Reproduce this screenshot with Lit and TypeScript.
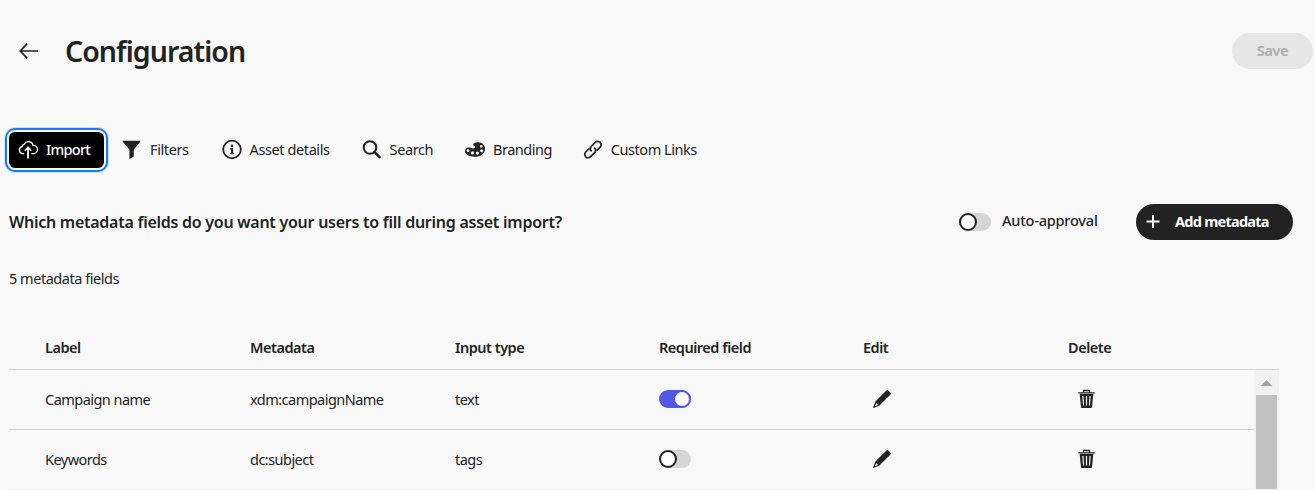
import { LitElement, html, css, svg } from "lit";
import { customElement, property } from "lit/decorators.js";
import { classMap } from "lit/directives/class-map.js";

const icons: Record<string, unknown> = {
  back: svg`<path d="M20 10H2.500M9.200 2.600L2.300 10l6.900 7.400" fill="none" stroke="currentColor" stroke-width="1.700"/>`,
  import: svg`<path d="M6.200 13.600H4.600A3.500 3.500 0 0 1 4.100 6.700 3 3 0 0 1 6.200 4.100 4.700 4.700 0 0 1 15 5.400a4.100 4.100 0 0 1 .6 8.200h-2.200" fill="none" stroke="currentColor" stroke-width="1.300"/><path d="M10 18.500V8.100" stroke="currentColor" stroke-width="1.800"/><path d="M6.800 10.800L10 7.200l3.200 3.600" fill="none" stroke="currentColor" stroke-width="1.500"/>`,
  filter: svg`<path d="M.9 .8h17.200c.4 0 .6.400.3.700l-6.600 7.900v7.200l-3.800 2.200c-.3.100-.6 0-.6-.3V9.400L.6 1.500c-.2-.3 0-.7.300-.7z" fill="currentColor"/>`,
  info: svg`<circle cx="10" cy="9.500" r="8.800" fill="none" stroke="currentColor" stroke-width="1.800"/><circle cx="10" cy="5.700" r="1.250" fill="currentColor"/><path d="M8 8.200h3.100v4.600h1.100v1.400H7.900v-1.400h1.200V9.600H8z" fill="currentColor"/>`,
  search: svg`<circle cx="8" cy="7.500" r="6.300" fill="none" stroke="currentColor" stroke-width="2"/><path d="M12.600 12.100l5 5" stroke="currentColor" stroke-width="2.600" stroke-linecap="round"/>`,
  palette: svg`<path fill="currentColor" fill-rule="evenodd" d="M13 2.300c4.100.1 7 2.800 7 6.400 0 4.700-4.300 8.100-10.300 8.100C4 16.800 0 14.500 0 11.100 0 8.900 1.700 7.400 4 7.400c2 0 3.100 1 4.500 1 1.200 0 1.700-.6 1.700-1.400 0-1.300-2.100-.9-2.100-2.200C8.100 3.200 10.300 2.200 13 2.300zM16.300 4.900a1.400 1.400 0 1 0 0 2.800 1.400 1.400 0 0 0 0-2.800zM16.600 9.200a1.500 1.500 0 1 0 0 3 1.500 1.500 0 0 0 0-3zM12.400 11.500a1.600 1.600 0 1 0 0 3.200 1.600 1.600 0 0 0 0-3.200zM7.500 11.200a1.700 1.700 0 1 0 0 3.400 1.700 1.700 0 0 0 0-3.400zM3.100 9.300a1.400 1.400 0 1 0 0 2.800 1.400 1.400 0 0 0 0-2.800z"/>`,
  link: svg`<g fill="none" stroke="currentColor" stroke-width="1.700"><path d="M8.600 11.400A3.400 3.400 0 0 1 8 6.700l4.300-4.300a3.300 3.300 0 0 1 4.900 4.700l-3.500 3.500"/><path d="M11.300 7.700a3.400 3.400 0 0 1 .6 4.700l-4.300 4.300a3.300 3.300 0 0 1-4.900-4.700l3.500-3.500"/></g>`,
  plus: svg`<path d="M8 3v13M1.500 9.500h13" stroke="currentColor" stroke-width="2"/>`,
  pencil: svg`<path fill="currentColor" fill-rule="evenodd" d="M14.700 1.200c.4-.4.900-.4 1.300 0l2.800 2.800c.4.400.4.800 0 1.200L7.400 16.400 1.700 18.900c-.4.200-.7-.1-.6-.5L3.400 12.500zM4.300 14.100l-1.400 3.200 3.200-1.400z"/>`,
  trash: svg`<path fill="currentColor" fill-rule="evenodd" d="M2.700 5h13.600l-1.300 13.300c-.1.500-.4.800-.9.800H4.900c-.5 0-.8-.3-.9-.8zM5.300 6.900l.7 9.700h1.100l-.6-9.700zM8.900 6.900v9.700h1.200V6.900zM12.500 6.900l-.6 9.700h1.100l.7-9.700z"/><path d="M1.300 3.800h16.400M6.500 3.600V1.500h6v2.100" fill="none" stroke="currentColor" stroke-width="1.300"/>`,
};

const fields = [
  { label: "Campaign name", metadata: "xdm:campaignName", type: "text", required: true },
  { label: "Keywords", metadata: "dc:subject", type: "tags", required: false },
];

const tabs = [
  { id: "import", icon: "import", label: "Import" },
  { id: "filters", icon: "filter", label: "Filters" },
  { id: "details", icon: "info", label: "Asset details" },
  { id: "search", icon: "search", label: "Search" },
  { id: "branding", icon: "palette", label: "Branding" },
  { id: "links", icon: "link", label: "Custom Links" },
];

@customElement("ui-icon")
class UiIcon extends LitElement {
  @property() name = "";
  static styles = css`
    :host { display: block; width: 20px; height: 20px; flex: none; }
    .glyph { display: block; width: 100%; height: 100%; overflow: visible; }
  `;
  render() {
    return html`<svg class="glyph" viewBox="0 0 20 20">${icons[this.name]}</svg>`;
  }
}

@customElement("ui-switch")
class UiSwitch extends LitElement {
  @property({ type: Boolean }) on = false;
  static styles = css`
    :host { display: block; flex: none; }
    .track { display: flex; box-sizing: border-box; width: 32px; height: 18px; border-radius: 9px; background: #d5d5d5; }
    .knob { box-sizing: border-box; width: 18px; height: 18px; border: 2px solid #222; border-radius: 50%; background: #fff; }
    .track.on { background: #5258e4; justify-content: flex-end; }
    .on .knob { border-color: #5258e4; }
  `;
  render() {
    return html`<div class=${classMap({ track: true, on: this.on })}><div class="knob"></div></div>`;
  }
}

@customElement("app-root")
class AppRoot extends LitElement {
  static styles = css`
    :host { display: block; height: 490px; overflow: hidden; background: #f8f8f8; color: #222; font: 14.5px/20px "Noto Sans", "Open Sans", sans-serif; letter-spacing: -0.53px; }
    .page { display: flex; flex-direction: column; height: 490px; }
    .header { display: flex; align-items: center; height: 36px; padding: 33px 2px 0 18px; }
    .title { margin: 0 auto 0 27px; font-size: 28.5px; line-height: 36px; font-weight: 600; letter-spacing: -0.95px; }
    .save { width: 81px; height: 36px; border-radius: 18px; background: #e6e6e6; color: #b1b1b1; font-weight: 700; line-height: 34px; text-align: center; }
    .tabs { display: flex; margin: 62px 0 0 9px; height: 38px; align-items: center; letter-spacing: -0.4px; }
    .tab { display: flex; align-items: center; gap: 8px; height: 36px; }
    .tab span { margin-top: -2px; }
    .tab + .tab { margin-left: 32px; }
    .tab.active { width: 76px; padding: 0 10px 0 9px; border-radius: 6px; background: #000; color: #fff; font-weight: 500; letter-spacing: -0.7px; box-shadow: 0 0 0 2px #f8f8f8, 0 0 0 4px #1b7bf0, 0 0 0 5px #cfe2fa; }
    .tab.active + .tab { margin-left: 18px; }
    .tab.details { margin-left: 33px; }
    .tab.links { margin-left: 31px; letter-spacing: -0.45px; }
    .tab.branding { letter-spacing: -0.5px; }
    .toolbar { display: flex; align-items: center; height: 36px; margin: 35px 22px 0 9px; }
    .question { margin-right: auto; font-size: 16px; font-weight: 600; letter-spacing: -0.26px; }
    .auto { width: 95px; margin: -4px 39px 0 11px; font-weight: 500; letter-spacing: -0.2px; white-space: nowrap; }
    .add { display: flex; align-items: center; box-sizing: border-box; width: 157px; height: 36px; padding-left: 9px; gap: 10px; border-radius: 18px; background: #222; color: #fff; font-weight: 700; letter-spacing: -0.75px; }
    .add span { margin-top: -2px; }
    .count { margin: 28px 0 0 9px; letter-spacing: -0.47px; }
    .row { display: grid; grid-template-columns: 205px 205px 204px 204px 205px 1fr; align-items: center; padding-left: 36px; box-sizing: border-box; }
    .table { margin: 38px 36px 0 9px; width: 1270px; }
    .head { height: 44px; padding-bottom: 2px; border-bottom: 1px solid #d5d5d5; font-weight: 600; letter-spacing: -0.48px; }
    .body { display: flex; height: 120px; }
    .rows { flex: 1; }
    .rows .row { height: 60px; padding-bottom: 1px; border-bottom: 1px solid #d0d0d0; }
    .rows .row:last-child { border-color: #ededed; }
    .action { margin-left: 9px; }
    .scroll { width: 25px; background: #f1f1f1; display: flex; flex-direction: column; align-items: center; }
    .arrow { width: 12px; height: 6px; margin: 10px 0 9px; background: #a3a3a3; clip-path: polygon(50% 0, 100% 100%, 0 100%); }
    .thumb { width: 21px; height: 94px; background: #c1c1c1; }
  `;
  render() {
    return html`<main class="page">
      <header class="header"><ui-icon name="back"></ui-icon><div class="title">Configuration</div><div class="save">Save</div></header>
      <nav class="tabs">${tabs.map((t, i) => html`<div class=${classMap({ tab: true, active: i === 0, [t.id]: true })}><ui-icon name=${t.icon}></ui-icon><span>${t.label}</span></div>`)}</nav>
      <section class="toolbar"><span class="question">Which metadata fields do you want your users to fill during asset import?</span><ui-switch></ui-switch><span class="auto">Auto-approval</span><div class="add"><ui-icon name="plus"></ui-icon><span>Add metadata</span></div></section>
      <div class="count">5 metadata fields</div>
      <section class="table">
        <div class="row head">${["Label", "Metadata", "Input type", "Required field", "Edit", "Delete"].map((h) => html`<span>${h}</span>`)}</div>
        <div class="body">
          <div class="rows">${fields.map((f) => html`<div class="row"><span>${f.label}</span><span>${f.metadata}</span><span>${f.type}</span><ui-switch ?on=${f.required}></ui-switch><ui-icon class="action" name="pencil"></ui-icon><ui-icon class="action" name="trash"></ui-icon></div>`)}</div>
          <div class="scroll"><div class="arrow"></div><div class="thumb"></div></div>
        </div>
      </section>
    </main>`;
  }
}
